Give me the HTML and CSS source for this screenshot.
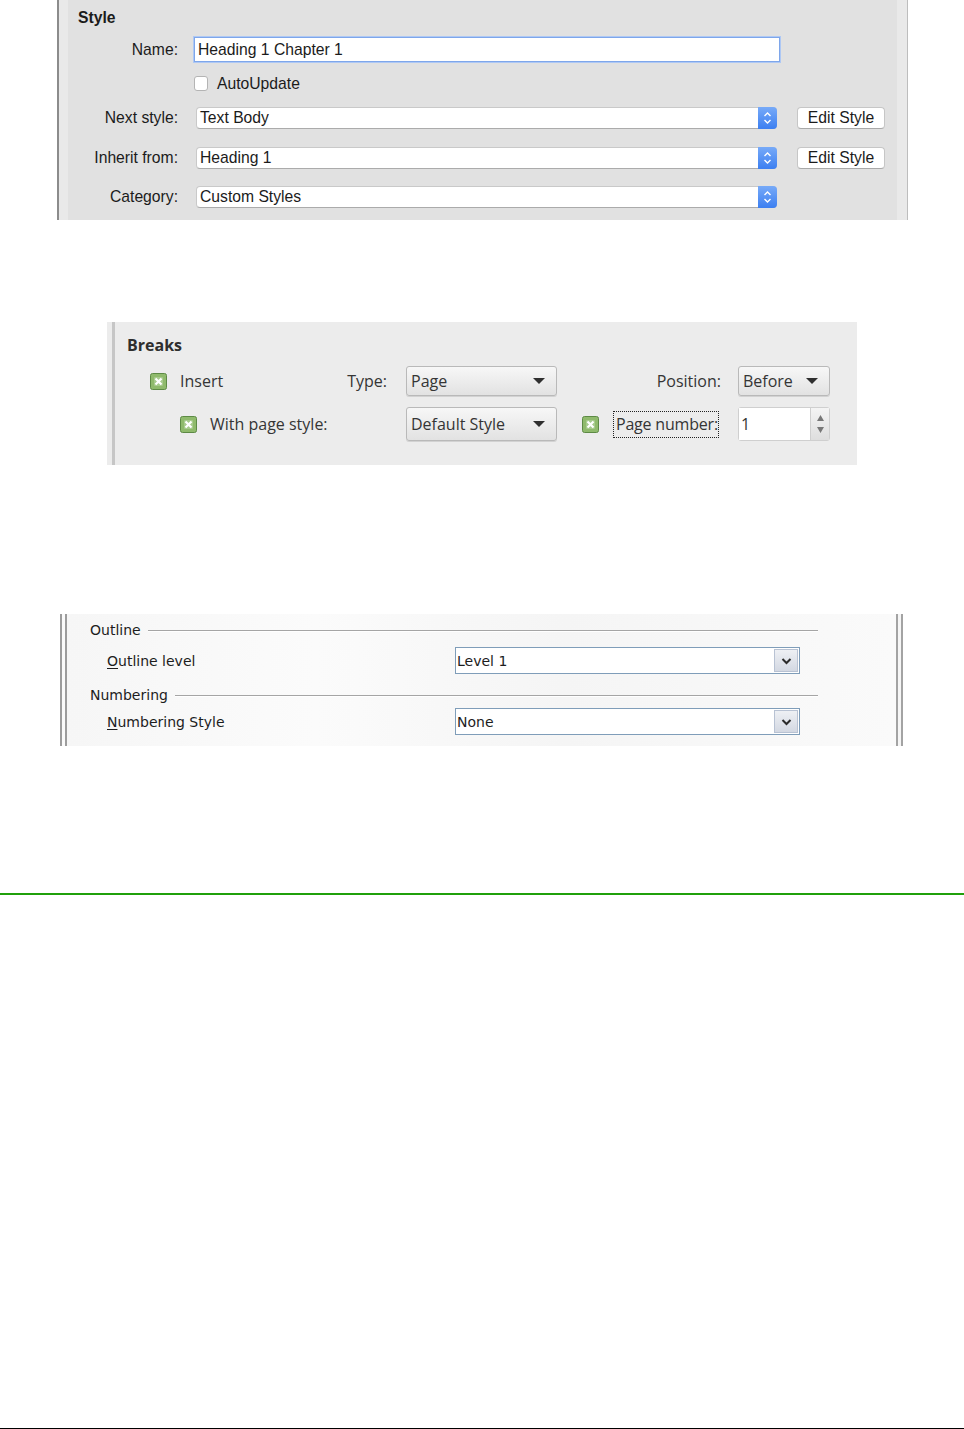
FILE: index.html
```html
<!DOCTYPE html>
<html lang="en">
<head>
    <meta charset="UTF-8">
    <meta name="viewport" content="width=device-width, initial-scale=1.0">
    <title>Paragraph Style Dialogs</title>
    <link rel="stylesheet" href="styles.css">
</head>
<body>
    <div class="page">

        <!-- Organizer tab, Mac look -->
        <section class="style-panel">
            <div class="panel-title">Style</div>

            <div class="form-row row-name">
                <span class="row-label">Name:</span>
                <div class="text-field">Heading 1 Chapter 1</div>
            </div>

            <div class="form-row row-auto">
                <span class="row-label"></span>
                <span class="mac-check"></span>
                <span class="check-text">AutoUpdate</span>
            </div>

            <div class="form-row select-row">
                <span class="row-label">Next style:</span>
                <div class="mac-select">
                    <span class="select-value">Text Body</span>
                    <span class="stepper">
                        <svg width="9" height="14" viewBox="0 0 9 14"><path d="M1.5 5 L4.5 2 L7.5 5 M1.5 9 L4.5 12 L7.5 9" fill="none" stroke="#fff" stroke-width="1.4"/></svg>
                    </span>
                </div>
                <button class="mac-button" type="button">Edit Style</button>
            </div>

            <div class="form-row select-row">
                <span class="row-label">Inherit from:</span>
                <div class="mac-select">
                    <span class="select-value">Heading 1</span>
                    <span class="stepper">
                        <svg width="9" height="14" viewBox="0 0 9 14"><path d="M1.5 5 L4.5 2 L7.5 5 M1.5 9 L4.5 12 L7.5 9" fill="none" stroke="#fff" stroke-width="1.4"/></svg>
                    </span>
                </div>
                <button class="mac-button" type="button">Edit Style</button>
            </div>

            <div class="form-row select-row row-last">
                <span class="row-label">Category:</span>
                <div class="mac-select">
                    <span class="select-value">Custom Styles</span>
                    <span class="stepper">
                        <svg width="9" height="14" viewBox="0 0 9 14"><path d="M1.5 5 L4.5 2 L7.5 5 M1.5 9 L4.5 12 L7.5 9" fill="none" stroke="#fff" stroke-width="1.4"/></svg>
                    </span>
                </div>
            </div>
        </section>

        <!-- Text flow tab, Linux look -->
        <section class="breaks-panel">
            <div class="breaks-inner">
                <div class="panel-title breaks-title">Breaks</div>

                <div class="breaks-grid">
                    <div class="cell-left">
                        <span class="green-check">
                            <svg width="17" height="17" viewBox="0 0 17 17"><rect x="0.5" y="0.5" width="16" height="16" rx="2" fill="#8fba6c" stroke="#5d8a45"/><rect x="4" y="4" width="9" height="9" rx="1" fill="#a7ca8d"/><path d="M5.5 5.5 L11.5 11.5 M11.5 5.5 L5.5 11.5" stroke="#fff" stroke-width="2.2"/></svg>
                        </span>
                        <span class="check-label">Insert</span>
                        <span class="push-right">Type:</span>
                    </div>
                    <div class="gtk-select row-one"><span>Page</span><span class="tri"></span></div>
                    <div class="cell-label">Position:</div>
                    <div class="gtk-select row-one"><span>Before</span><span class="tri"></span></div>

                    <div class="cell-left indent">
                        <span class="green-check">
                            <svg width="17" height="17" viewBox="0 0 17 17"><rect x="0.5" y="0.5" width="16" height="16" rx="2" fill="#8fba6c" stroke="#5d8a45"/><rect x="4" y="4" width="9" height="9" rx="1" fill="#a7ca8d"/><path d="M5.5 5.5 L11.5 11.5 M11.5 5.5 L5.5 11.5" stroke="#fff" stroke-width="2.2"/></svg>
                        </span>
                        <span class="check-label">With page style:</span>
                    </div>
                    <div class="gtk-select row-two"><span>Default Style</span><span class="tri"></span></div>
                    <div class="cell-page">
                        <span class="green-check">
                            <svg width="17" height="17" viewBox="0 0 17 17"><rect x="0.5" y="0.5" width="16" height="16" rx="2" fill="#8fba6c" stroke="#5d8a45"/><rect x="4" y="4" width="9" height="9" rx="1" fill="#a7ca8d"/><path d="M5.5 5.5 L11.5 11.5 M11.5 5.5 L5.5 11.5" stroke="#fff" stroke-width="2.2"/></svg>
                        </span>
                        <span class="dotted-label">Page number:</span>
                    </div>
                    <div class="spin-box">
                        <span class="spin-value">1</span>
                        <span class="spin-buttons">
                            <svg width="9" height="22" viewBox="0 0 9 22"><path d="M1 8 L4.5 2 L8 8 Z M1 14 L4.5 20 L8 14 Z" fill="#777"/></svg>
                        </span>
                    </div>
                </div>
            </div>
        </section>

        <!-- Outline & Numbering tab, Windows look -->
        <section class="outline-panel">
            <div class="group-head"><span>Outline</span><span class="group-rule"></span></div>
            <div class="win-row">
                <span class="win-label"><u>O</u>utline level</span>
                <div class="win-select">
                    <span>Level 1</span>
                    <span class="win-arrow">
                        <svg width="11" height="8" viewBox="0 0 11 8"><path d="M1.5 2 L5.5 6 L9.5 2" fill="none" stroke="#2b2b2b" stroke-width="2"/></svg>
                    </span>
                </div>
            </div>
            <div class="group-head group-second"><span>Numbering</span><span class="group-rule"></span></div>
            <div class="win-row win-row-last">
                <span class="win-label"><u>N</u>umbering Style</span>
                <div class="win-select">
                    <span>None</span>
                    <span class="win-arrow">
                        <svg width="11" height="8" viewBox="0 0 11 8"><path d="M1.5 2 L5.5 6 L9.5 2" fill="none" stroke="#2b2b2b" stroke-width="2"/></svg>
                    </span>
                </div>
            </div>
        </section>

        <div class="green-rule"></div>
        <div class="page-end"></div>
    </div>
</body>
</html>
```

FILE: styles.css
```css
body {
    margin: 0;
    background-color: #fff;
    font-family: "Liberation Sans", Arial, sans-serif;
}

.page {
    display: flex;
    flex-direction: column;
    height: 1429px;
}

/* ---------- Style panel (Mac) ---------- */

.style-panel {
    box-sizing: border-box;
    width: 851px;
    height: 220px;
    margin-left: 57px;
    padding-left: 19px;
    border-left: 2px solid #8c8c8c;
    border-right: 1px solid #bdbdbd;
    background: linear-gradient(to right, #e9e9e9 0, #e9e9e9 9px, #e1e1e1 9px, #e1e1e1 838px, #e9e9e9 838px);
    font-size: 15.7px;
    color: #1b1b1b;
}

.panel-title {
    font-weight: bold;
}

.style-panel .panel-title {
    padding-top: 6px;
    height: 24px;
    line-height: 24px;
}

.form-row {
    display: flex;
    align-items: center;
}

.row-label {
    width: 100px;
    margin-right: 15px;
    text-align: right;
    flex-shrink: 0;
    white-space: nowrap;
}

.row-name {
    margin-top: 6px;
    height: 27px;
}

.text-field {
    box-sizing: border-box;
    width: 586px;
    height: 25px;
    margin-left: 1px;
    padding-left: 3px;
    line-height: 23px;
    background-color: #fff;
    border: 1px solid #7ea6ea;
    box-shadow: 0 0 0 1px #aec8f4;
}

.row-auto {
    margin-top: 9px;
    height: 23px;
}

.mac-check {
    box-sizing: border-box;
    width: 14px;
    height: 15px;
    margin-left: 1px;
    margin-right: 9px;
    background-color: #fff;
    border: 1px solid #b4b4b4;
    border-radius: 3px;
}

.select-row {
    height: 22px;
    margin-top: 12px;
}

.select-row + .select-row {
    margin-top: 18px;
}

.select-row.row-last {
    margin-top: 17px;
}

.mac-select {
    box-sizing: border-box;
    display: flex;
    width: 581px;
    height: 22px;
    margin-left: 3px;
    background-color: #fff;
    border: 1px solid #c9c9c9;
    border-bottom-color: #ababab;
    border-radius: 4px;
}

.select-value {
    flex: 1;
    padding-left: 3px;
    line-height: 20px;
}

.stepper {
    display: flex;
    align-items: center;
    justify-content: center;
    width: 19px;
    margin: -1px -1px -1px 0;
    background: linear-gradient(#77aaf8, #3c7ff1);
    border-radius: 0 4px 4px 0;
}

.mac-button {
    box-sizing: border-box;
    width: 88px;
    height: 22px;
    margin-left: 20px;
    padding: 0;
    font-family: "Liberation Sans", Arial, sans-serif;
    font-size: 15.7px;
    color: #1b1b1b;
    background-color: #fff;
    border: 1px solid #c6c6c6;
    border-bottom-color: #a9a9a9;
    border-radius: 4px;
}

/* ---------- Breaks panel (GTK) ---------- */

.breaks-panel {
    box-sizing: border-box;
    width: 750px;
    height: 143px;
    margin-top: 102px;
    margin-left: 107px;
    padding-left: 5px;
    background-color: #ececec;
    font-family: "Open Sans", "Noto Sans", sans-serif;
    font-size: 16px;
    color: #353535;
}

.breaks-inner {
    height: 100%;
    padding-left: 12px;
    border-left: 3px solid #c6c6c6;
}

.breaks-title {
    padding-top: 12px;
    line-height: 22px;
    color: #2e2e2e;
}

.breaks-grid {
    display: grid;
    grid-template-columns: 260px 151px 143px 92px;
    grid-template-rows: 30px 34px;
    column-gap: 19px;
    row-gap: 11px;
    margin-top: 10px;
    align-items: center;
}

.cell-left {
    display: flex;
    align-items: center;
    padding-left: 23px;
}

.cell-left.indent {
    padding-left: 53px;
}

.green-check {
    display: flex;
    width: 17px;
    height: 17px;
}

.check-label {
    margin-left: 13px;
    white-space: nowrap;
}

.push-right {
    margin-left: auto;
}

.cell-label {
    margin-right: -2px;
    text-align: right;
}

.gtk-select {
    box-sizing: border-box;
    display: flex;
    align-items: center;
    justify-content: space-between;
    height: 100%;
    padding: 0 11px 0 4px;
    background: linear-gradient(#f7f7f7, #e2e2e2);
    border: 1px solid #b9b9b9;
    border-radius: 3px;
    box-shadow: 0 1px 0 #d2d2d2;
}

.tri {
    width: 0;
    height: 0;
    border-left: 6px solid transparent;
    border-right: 6px solid transparent;
    border-top: 6px solid #2f2f2f;
}

.cell-page {
    display: flex;
    align-items: center;
    padding-left: 6px;
}

.dotted-label {
    margin-left: 14px;
    padding: 1px 0 2px 2px;
    border: 1px dotted #222;
    line-height: 22px;
    white-space: nowrap;
    letter-spacing: -0.2px;
}

.spin-box {
    box-sizing: border-box;
    display: flex;
    height: 100%;
    background-color: #e4e4e4;
    border: 1px solid #cfcfcf;
    border-radius: 3px;
}

.spin-value {
    flex: 1;
    padding-left: 2px;
    line-height: 32px;
    background-color: #fff;
    border-right: 1px solid #cfcfcf;
}

.spin-buttons {
    display: flex;
    align-items: center;
    justify-content: center;
    width: 18px;
    background: linear-gradient(#f4f4f4, #dedede);
}

/* ---------- Outline panel (Windows) ---------- */

.outline-panel {
    box-sizing: border-box;
    width: 843px;
    height: 132px;
    margin-top: 149px;
    margin-left: 60px;
    padding: 7px 78px 0 23px;
    background: linear-gradient(to right, #f6f6f6, #fbfbfb 30%, #f5f5f5 60%, #fafafa);
    border-left: 7px double #9c9c9c;
    border-right: 7px double #a3a3a3;
    font-family: "DejaVu Sans", Verdana, sans-serif;
    font-size: 14px;
    color: #1d1d1d;
}

.group-head {
    display: flex;
    align-items: center;
    height: 18px;
    line-height: 18px;
}

.group-second {
    margin-top: 12px;
}

.group-rule {
    flex: 1;
    height: 1px;
    margin-left: 7px;
    background-color: #a5a5a5;
    box-shadow: 0 1px 0 #fff;
}

.win-row {
    display: flex;
    align-items: center;
    justify-content: space-between;
    height: 27px;
    margin-top: 8px;
    padding: 0 18px 0 17px;
}

.win-row-last {
    margin-top: 4px;
}

.win-label u {
    text-underline-offset: 2px;
}

.win-select {
    box-sizing: border-box;
    display: flex;
    align-items: center;
    width: 345px;
    height: 27px;
    padding: 1px;
    background-color: #fff;
    border: 1px solid #7f9db9;
}

.win-select span:first-child {
    flex: 1;
}

.win-arrow {
    box-sizing: border-box;
    display: flex;
    align-items: center;
    justify-content: center;
    width: 24px;
    height: 23px;
    background: linear-gradient(#eef0f4, #d3d8e2);
    border: 1px solid #b8c2d3;
}

/* ---------- Page rules ---------- */

.green-rule {
    height: 2px;
    margin-top: 147px;
    background-color: #20a00b;
}

.page-end {
    height: 1px;
    margin-top: auto;
    background-color: #000;
}
```
